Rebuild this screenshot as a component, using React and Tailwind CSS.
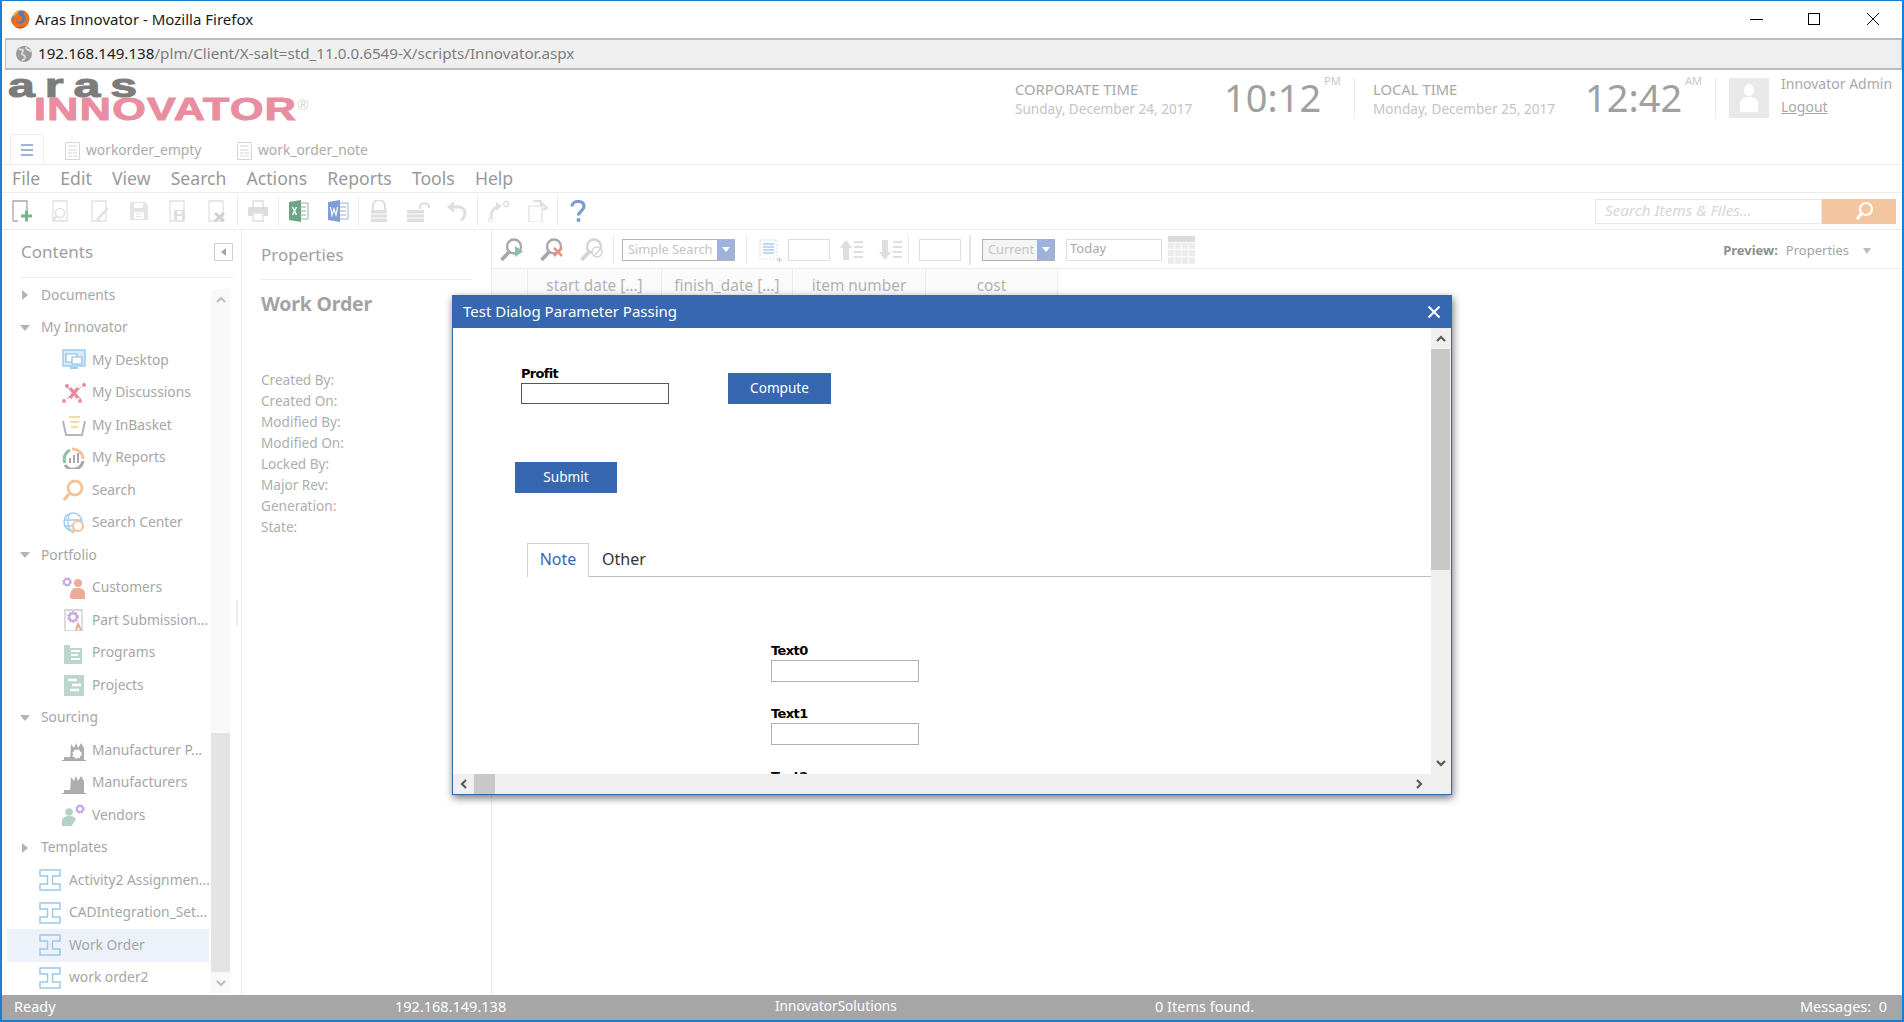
import React from "react";

const S = ({ children, w = 22, h = 22, vb, className = "" }) => (
  <svg width={w} height={h} viewBox={vb || `0 0 ${w} ${h}`} fill="none" className={"shrink-0 " + className}>{children}</svg>
);

const Gear = ({ x, y, r = 4, c = "#c6a9e0" }) => (
  <g>
    <circle cx={x} cy={y} r={r * 0.75} stroke={c} strokeWidth={r * 0.45} fill="#fff" />
    <circle cx={x} cy={y} r={r} stroke={c} strokeWidth={r * 0.4} strokeDasharray="1.6 1.6" />
  </g>
);

const Firefox = () => (
  <S w={20} h={20}>
    <circle cx="10.500" cy="10" r="8.500" fill="#4a7cc4" />
    <path d="M11 .8a9.300 9.300 0 1 1-9.800 7c.4 1.800 1.300 2.800 2.300 3.400-.3-2 .4-3.400 2-4.200.2-1.600 1.800-3 3.800-3.400-.8 1-.8 2 .2 2.600 2.400.4 3.400 2.200 2.800 4.200-.8 2.600-5 3-7 .8.800 3 4.400 4.400 7.200 2.800 3-1.800 3.400-5.400 1.800-8-1-1.800-1-3.800-3.300-5.200z" fill="#ea6f22" />
    <path d="M3 6c1.300-2.600 4-5 7.500-5.200L7 4.500 4 8z" fill="#f7b633" />
    <path d="M5 18c3 2 8 2 11-1-3 .8-7 1-11 1z" fill="#d9491d" />
  </S>
);

const Globe = () => (
  <S w={18} h={18}>
    <circle cx="9" cy="9" r="8" fill="#9a9a9a" />
    <path d="M4 4c2 1 3 0 4 1s-2 3-1 4 3 1 3 3-2 3-3 4M11 2c0 2 1 3 3 3l2 2" stroke="#d8d8d8" strokeWidth="2" />
  </S>
);

const Doc = ({ c = "#e0e0e0", children }) => (
  <S>
    <path d="M3 21V1h14v20z" stroke={c} strokeWidth="1.300" fill="#fff" />
    {children}
  </S>
);

const TbIcons = {
  add: <S><path d="M2 21V1h14v12M2 21h5" stroke="#a9a9a9" strokeWidth="1.300" /><path d="M10 16h11M15.500 10.500v11" stroke="#7db28f" strokeWidth="3" /></S>,
  view: <Doc><circle cx="10" cy="13" r="4.500" stroke="#e0e0e0" strokeWidth="1.500" fill="#fff" /><path d="M7 16l-4 4" stroke="#e0e0e0" strokeWidth="2" /></Doc>,
  edit: <Doc><path d="M19 8L8 20" stroke="#e0e0e0" strokeWidth="2.500" /></Doc>,
  save: <S><path d="M2 2h15l3 3v15H2z" fill="#e4e4e4" /><path d="M6 3h9v5H6zM6 12h10v7H6z" fill="#fff" /><path d="M8 14h6M8 16.500h6" stroke="#e4e4e4" /></S>,
  saveas: <Doc><path d="M7 10h11v10H7z" fill="#dedede" /><path d="M10 11h5v3h-5zM10 16h5v4h-5z" fill="#fff" /></Doc>,
  del: <Doc><path d="M9 13l9 8M18 13l-9 8" stroke="#d0d0d0" strokeWidth="3" /></Doc>,
  print: <S><path d="M6 1h10v7H6z" stroke="#dedede" strokeWidth="1.500" /><path d="M1 7h20v9H1z" fill="#dcdcdc" /><path d="M6 13h10v8H6z" stroke="#dedede" strokeWidth="1.300" fill="#fff" /></S>,
  excel: <S><path d="M9 3h11v16H9z" stroke="#8fb9a2" fill="#fff" /><path d="M11 7h7M11 11h7M11 15h7" stroke="#b0cfbd" strokeWidth="1.500" /><path d="M1 2l12-2v22L1 20z" fill="#6ea585" /><path d="M4.500 7l4 8M8.500 7l-4 8" stroke="#fff" strokeWidth="1.500" /></S>,
  word: <S><path d="M9 3h12v16H9z" stroke="#9cb3dd" fill="#fff" /><path d="M13 7h6M13 11h6M13 15h6" stroke="#b6c7e6" strokeWidth="1.500" /><path d="M1 2l12-2v22L1 20z" fill="#7f9fd6" /><path d="M3.500 7l1.500 8 2-6 2 6 1.500-8" stroke="#fff" strokeWidth="1.200" /></S>,
  lock: <S><path d="M5 10V6a6 6 0 0 1 12 0v4" stroke="#dedede" strokeWidth="2.200" /><path d="M3 10h16v12H3z" fill="#dedede" /><path d="M3 14h16M3 18h16" stroke="#fff" /></S>,
  unlock: <S w={24}><path d="M14 9V6a5 5 0 0 1 9 0v2" stroke="#dedede" strokeWidth="2" /><path d="M1 10h17v12H1z" fill="#dedede" /><path d="M1 14h17M1 18h17" stroke="#fff" /></S>,
  undo: <S><path d="M5 7h8a6 6 0 0 1 6 6c0 3-1 5-4 7" stroke="#dedede" strokeWidth="3" /><path d="M8 1v12L1 7z" fill="#dedede" /></S>,
  redo: <S w={24}><path d="M4 18c0-6 2-10 7-11" stroke="#dedede" strokeWidth="2.500" /><path d="M9 2l6 4-6 5z" fill="#dedede" /><circle cx="3.500" cy="20" r="2" stroke="#dedede" /><circle cx="19" cy="4" r="2.500" stroke="#dedede" strokeWidth="1.300" /></S>,
  copy: <S><path d="M3 6h13v16H3z" stroke="#dedede" strokeWidth="1.200" fill="#fff" /><path d="M7 1h8v5M13 1l8 7-4 2" stroke="#dedede" strokeWidth="2" /></S>,
  help: <S><path d="M5 6.500C5 3 8 1.500 11 1.500c4 0 6 2.200 6 5 0 4.500-5.500 4.500-5.500 9" stroke="#7c9bd0" strokeWidth="3.200" /><circle cx="11.500" cy="20" r="2" fill="#7c9bd0" /></S>,
};

const Sep = ({ cls = "mx-[9px]" }) => <div className={"w-px h-[30px] bg-[#ececec] shrink-0 " + cls} />;

const Mag = ({ children, c = "#a8a8a8" }) => (
  <S w={24} h={24}>
    <circle cx="14" cy="8.500" r="7" stroke={c} strokeWidth="2.400" fill="#fff" />
    <path d="M9 14L1.500 22" stroke={c} strokeWidth="3.800" />
    {children}
  </S>
);

const Tmpl = () => (
  <S>
    <path d="M1 7V1h20v6h-7.500v8H21v6H1v-6h7.500V7z" stroke="#9cc8ec" strokeWidth="1.500" />
  </S>
);

const Factory = ({ gear }) => (
  <S w={24} h={22}>
    <path d="M0 21h24v1.500H0z" fill="#a8a8a8" />
    <path d="M8 21L9 5l3 4 2-5 2 5 3-5 3 5v12z" fill="#adadad" />
    <path d="M2 18h7v3H2z" fill="#adadad" />
    {gear && <Gear x={15} y={15} r={4} c="#fff" />}
  </S>
);

const TI = {
  desktop: <S w={24}><path d="M1 1h22v16H1z" fill="#d7ebfa" stroke="#9fcdf0" strokeWidth="1.500" /><path d="M4 5h11v8H4z" stroke="#86bce8" strokeWidth="1.200" fill="#fff" /><path d="M10 8h10v7H10z" stroke="#86bce8" strokeWidth="1.200" fill="#fff" /><path d="M8 19h8" stroke="#9fcdf0" strokeWidth="2" /></S>,
  disc: <S w={24}><path d="M8 6l8 10M16 6L8 16" stroke="#ea8a9a" strokeWidth="3.500" /><path d="M5 5l14 12M19 5L5 17" stroke="#ea8a9a" strokeWidth="1" /><circle cx="5" cy="4" r="2" fill="#ea8a9a" /><circle cx="22" cy="3" r="2" fill="#ea8a9a" /><circle cx="2" cy="19" r="2" fill="#ea8a9a" /><circle cx="18" cy="19" r="2" fill="#ea8a9a" /></S>,
  basket: <S w={24}><path d="M1 7l3 14h16l3-14" stroke="#b5b5b5" strokeWidth="2" /><path d="M7 3h11M8 8h9M9 13h7" stroke="#f5dc9c" strokeWidth="2.200" /></S>,
  reports: <S w={24}><path d="M3 16A10 10 0 0 1 8 3" stroke="#8ec0a3" strokeWidth="3" /><path d="M10 2a10 10 0 0 1 11 10" stroke="#f3c39c" strokeWidth="3" /><path d="M21 14a10 10 0 0 1-18 4" stroke="#a8a8a8" strokeWidth="3" /><path d="M8 11v5M12 8v8M16 6v10" stroke="#a9a9a9" strokeWidth="2" /></S>,
  search: <S w={24}><circle cx="13" cy="9" r="7" stroke="#f3c39c" strokeWidth="2.800" fill="#fff" /><path d="M7 15l-5 6" stroke="#f3c39c" strokeWidth="3.500" /></S>,
  center: <S w={24}><circle cx="11" cy="10" r="9" stroke="#9fcdf0" strokeWidth="1.500" /><path d="M2 8h18M2 14h10M8 1C5 6 5 14 9 19" stroke="#9fcdf0" strokeWidth="1.300" /><circle cx="16" cy="14" r="5" stroke="#f3c39c" strokeWidth="2.200" fill="#fff" /><path d="M12 18l-2 3" stroke="#f3c39c" strokeWidth="2.500" /></S>,
  customers: <S w={24}><Gear x={5} y={5} r={4} /><circle cx="16" cy="6" r="4" fill="#ecab9c" /><path d="M8 21c0-9 3-10 8-10s7 2 7 7v4H10z" fill="#ecab9c" /></S>,
  part: <S w={24}><path d="M3 1h17v21H3z" stroke="#c9c9c9" strokeWidth="1.300" fill="#fff" /><Gear x={11} y={8} r={5} /><path d="M14 21l2-6 3 6" stroke="#eba894" strokeWidth="2" /></S>,
  programs: <S w={24}><path d="M2 3h6v3h12v16H2z" fill="#bbd7cc" /><path d="M9 9h9M9 13h7M9 17h9" stroke="#fff" strokeWidth="2" /></S>,
  projects: <S w={24}><path d="M2 1h20v21H2z" fill="#bbd7cc" /><path d="M6 6h9M10 11h9M8 16h9" stroke="#fff" strokeWidth="2.500" /></S>,
  mfgp: <Factory gear />,
  mfg: <Factory />,
  vendors: <S w={24}><Gear x={18} y={5} r={4} /><circle cx="7" cy="8" r="3.800" fill="#b5d1c5" /><path d="M0 22v-5c0-3 3-5 7-5s6 1 7 3l-3 5-2 2z" fill="#b5d1c5" /></S>,
};

const Arrow = ({ open }) => open
  ? <div className="w-0 h-0 border-l-[5px] border-r-[5px] border-t-[6px] border-l-transparent border-r-transparent border-t-[#b4b4b4]" />
  : <div className="w-0 h-0 border-t-[5px] border-b-[5px] border-l-[6px] border-t-transparent border-b-transparent border-l-[#b4b4b4]" />;

const Group = ({ label, open }) => (
  <div className="h-[32.500px] flex items-center">
    <div className="w-[39px] shrink-0 pl-[18px]"><div className="w-[10px] flex justify-center"><Arrow open={open} /></div></div>
    <span>{label}</span>
  </div>
);

const Leaf = ({ icon, label }) => (
  <div className="h-[32.500px] flex items-center pl-[60px]">
    <div className="w-[30px] shrink-0 flex items-center">{TI[icon]}</div>
    <span className="whitespace-nowrap">{label}</span>
  </div>
);

const TLeaf = ({ label, sel }) => (
  <div className={"h-[32.500px] flex items-center " + (sel ? "bg-[#edf2fa] ml-[5px] pl-[32px] w-[203px]" : "pl-[37px]")}>
    <div className="w-[30px] shrink-0 flex items-center"><Tmpl /></div>
    <span className="whitespace-nowrap">{label}</span>
  </div>
);

const Chev = ({ d, c = "#5a5a5a", size = 10, sw = 2.200 }) => {
  const p = { up: "M1 7l4-4 4 4", down: "M1 3l4 4 4-4", left: "M7 1L3 5l4 4", right: "M3 1l4 4-4 4" }[d];
  return <svg width={size} height={size} viewBox="0 0 10 10" fill="none"><path d={p} stroke={c} strokeWidth={sw} /></svg>;
};

const Combo = ({ w, label, bg = "bg-white", border = "border-[#b5b5b5]" }) => (
  <div className={"h-[22px] flex border items-stretch shrink-0 " + border + " " + w}>
    <div className={"flex-1 flex items-center pl-[5px] pt-[1px] text-[12.800px] text-[#c4c4c4] " + bg}>{label}</div>
    <div className="w-[17px] bg-[#9db3dd] flex items-center justify-center">
      <div className="w-0 h-0 border-l-[4px] border-r-[4px] border-t-[5px] border-l-transparent border-r-transparent border-t-white" />
    </div>
  </div>
);

const Empty = ({ w = "w-[42px]" }) => <div className={"h-[22px] border border-[#dedede] shrink-0 " + w} />;

const Field = ({ label, mt }) => (
  <div className={"ml-[318px] w-[148px] " + mt}>
    <div className="h-[17px] text-[13px] leading-[17px] font-bold text-black font-['DejaVu_Sans',sans-serif] tracking-[-0.6px]">{label}</div>
    <div className="h-[22px] border border-[#b0b0b0] mt-[1px]" />
  </div>
);

export default function App() {
  const props = ["Created By:", "Created On:", "Modified By:", "Modified On:", "Locked By:", "Major Rev:", "Generation:", "State:"];
  return (
    <div className="relative w-[1904px] h-[1022px] overflow-hidden bg-white flex flex-col border-t border-x-2 border-b-2 border-[#1a7fd4] font-['Noto_Sans',sans-serif] text-[#a3a3a3]">
      {/* title bar */}
      <div className="h-[37px] shrink-0 flex items-center pl-[8px] pb-[1px] text-[15px] text-[#1a1a1a]">
        <Firefox />
        <span className="ml-[5px]">Aras Innovator - Mozilla Firefox</span>
        <div className="ml-auto flex items-center">
          <div className="w-[13px] h-px bg-black mr-[45px]" />
          <div className="w-[12px] h-[12px] border border-black mr-[46px]" />
          <svg width="14" height="14" viewBox="0 0 14 14" className="mr-[22px]"><path d="M1 1l12 12M13 1L1 13" stroke="#111" strokeWidth="1" /></svg>
        </div>
      </div>
      {/* address bar */}
      <div className="h-[32px] shrink-0 ml-[3px] bg-[#efefef] border-y-2 border-l border-r border-[#b6bcc2] flex items-center pl-[9px] pb-[1px] text-[15.200px]">
        <Globe />
        <span className="ml-[5px] text-[#222]">192.168.149.138</span>
        <span className="text-[#7d7d7d]">/plm/Client/X-salt=std_11.0.0.6549-X/scripts/Innovator.aspx</span>
      </div>
      {/* header */}
      <div className="h-[64px] shrink-0 flex items-start">
        <div className="w-[320px] h-[56px] pl-[6px] pt-[3px] font-['Liberation_Sans',sans-serif] font-bold leading-none select-none">
          <div className="text-[34px] h-[24px] leading-[24px] text-[#7c7c7c] tracking-[7px] origin-left scale-x-[1.42] [-webkit-text-stroke:1px_#7c7c7c]">aras</div>
          <div className="flex items-start ml-[26px]">
            <div className="text-[32px] h-[25px] leading-[25px] text-[#e98ea0] tracking-[1px] origin-left scale-x-[1.345] w-[264px] [-webkit-text-stroke:1px_#e98ea0]">INNOVATOR</div>
            <span className="text-[14px] font-normal text-[#cfcfcf] mt-[1px]">®</span>
          </div>
        </div>
        <div className="ml-auto flex items-start pt-[8px] pr-[11px]">
          <div className="w-[209px] pt-[1px]">
            <div className="text-[14.800px] leading-[20px] text-[#a8a8a8] whitespace-nowrap">CORPORATE TIME</div>
            <div className="text-[13.600px] leading-[19px] text-[#c4c4c4] whitespace-nowrap">Sunday, December 24, 2017</div>
          </div>
          <div className="w-[98px] text-[38px] leading-[41px] mt-[-1px] text-[#a0a0a0] whitespace-nowrap">10:12</div>
          <div className="text-[11px] text-[#c8c8c8] ml-[2px] w-[30px] mt-[-5px]">PM</div>
          <div className="w-px h-[40px] bg-[#ececec]" />
          <div className="w-[230px] pl-[18px] pt-[1px]">
            <div className="text-[14.800px] leading-[20px] text-[#a8a8a8] whitespace-nowrap">LOCAL TIME</div>
            <div className="text-[13.600px] leading-[19px] text-[#c4c4c4] whitespace-nowrap">Monday, December 25, 2017</div>
          </div>
          <div className="w-[100px] text-[38px] leading-[41px] mt-[-1px] text-[#a0a0a0] whitespace-nowrap">12:42</div>
          <div className="text-[11px] text-[#c8c8c8] w-[30px] mt-[-5px]">AM</div>
          <div className="w-px h-[40px] bg-[#ececec]" />
          <div className="w-[40px] h-[40px] ml-[13px] bg-[#e9e9e9] flex items-center justify-center">
            <svg width="20" height="30" viewBox="0 0 20 30"><ellipse cx="10" cy="7" rx="5" ry="6" fill="#fff" /><path d="M1 29v-9c0-4 4-6 9-6s9 2 9 6v9z" fill="#fff" /></svg>
          </div>
          <div className="ml-[12px] w-[110px] text-[14px] text-[#a8a8a8] whitespace-nowrap">
            <div className="leading-[20px] mt-[-4px]">Innovator Admin</div>
            <div className="leading-[20px] mt-[3px] underline">Logout</div>
          </div>
        </div>
      </div>
      {/* tabs */}
      <div className="h-[31px] shrink-0 flex items-stretch border-b border-[#ececec] text-[13.800px] text-[#ababab]">
        <div className="ml-[8px] w-[34px] border border-b-0 border-[#eeeeee] flex flex-col items-center justify-center gap-[3px]">
          <div className="w-[12px] h-[2px] bg-[#9db3dd]" /><div className="w-[12px] h-[2px] bg-[#9db3dd]" /><div className="w-[12px] h-[2px] bg-[#9db3dd]" />
        </div>
        <div className="flex items-center ml-[21px] pt-[3px]">
          <S w={15} h={18}><path d="M.5.500h14v17H.5z" stroke="#d5d5d5" /><path d="M3 4h9M3 8h9M3 11h4M8 11h4M3 14h4M8 14h4" stroke="#d5d5d5" /></S>
          <span className="ml-[6px] w-[151px]">workorder_empty</span>
          <S w={15} h={18}><path d="M.5.500h14v17H.5z" stroke="#d5d5d5" /><path d="M3 4h9M3 8h9M3 11h4M8 11h4M3 14h4M8 14h4" stroke="#d5d5d5" /></S>
          <span className="ml-[6px]">work_order_note</span>
        </div>
      </div>
      {/* menu */}
      <div className="h-[28px] shrink-0 flex items-center gap-[20.200px] pl-[10px] text-[17.600px] text-[#999] border-b border-[#ececec]">
        {["File", "Edit", "View", "Search", "Actions", "Reports", "Tools", "Help"].map(m => <span key={m}>{m}</span>)}
      </div>
      {/* toolbar */}
      <div className="h-[37px] shrink-0 flex items-center pl-[9px] border-b border-[#ececec]">
        <div className="flex gap-[17px]">{TbIcons.add}{TbIcons.view}{TbIcons.edit}{TbIcons.save}{TbIcons.saveas}{TbIcons.del}</div>
        <Sep />
        {TbIcons.print}
        <Sep />
        <div className="flex gap-[17px]">{TbIcons.excel}{TbIcons.word}</div>
        <Sep />
        <div className="flex gap-[16px]">{TbIcons.lock}{TbIcons.unlock}{TbIcons.undo}</div>
        <Sep />
        <div className="flex gap-[15px]">{TbIcons.redo}{TbIcons.copy}</div>
        <Sep />
        {TbIcons.help}
        <div className="ml-auto mr-[6px] flex items-center">
          <div className="w-[227px] h-[25px] border border-[#e6e6e6] pl-[9px] pb-[1px] flex items-center text-[15.300px] italic text-[#d6d6d6]">Search Items &amp; Files...</div>
          <div className="w-[74px] h-[25px] bg-[#f4c6a0] pl-[32px] flex items-center">
            <svg width="20" height="20" viewBox="0 0 20 20" fill="none"><circle cx="12" cy="8" r="6" stroke="#fff" strokeWidth="2.200" /><path d="M7 13l-4 5" stroke="#fff" strokeWidth="3" /></svg>
          </div>
        </div>
      </div>
      {/* main */}
      <div className="flex-1 min-h-0 flex">
        {/* sidebar */}
        <div className="w-[240px] shrink-0 border-r border-[#ececec] flex flex-col relative">
          <div className="h-[48px] shrink-0 ml-[19px] mr-[8px] border-b border-[#ececec] flex items-center justify-between text-[17px] text-[#a0a0a0] pb-[3px]">
            <span>Contents</span>
            <div className="w-[19px] h-[18px] border border-[#cfcfcf] flex items-center justify-center">
              <div className="w-0 h-0 border-t-[4px] border-b-[4px] border-r-[5px] border-t-transparent border-b-transparent border-r-[#a5a5a5]" />
            </div>
          </div>
          <div className="flex-1 min-h-0 flex pt-[1px] pr-[11px]">
            <div className="w-[207px] shrink-0 text-[13.800px] text-[#a6a6a6] overflow-hidden">
              <Group label="Documents" />
              <Group label="My Innovator" open />
              <Leaf icon="desktop" label="My Desktop" />
              <Leaf icon="disc" label="My Discussions" />
              <Leaf icon="basket" label="My InBasket" />
              <Leaf icon="reports" label="My Reports" />
              <Leaf icon="search" label="Search" />
              <Leaf icon="center" label="Search Center" />
              <Group label="Portfolio" open />
              <Leaf icon="customers" label="Customers" />
              <Leaf icon="part" label="Part Submission..." />
              <Leaf icon="programs" label="Programs" />
              <Leaf icon="projects" label="Projects" />
              <Group label="Sourcing" open />
              <Leaf icon="mfgp" label="Manufacturer P..." />
              <Leaf icon="mfg" label="Manufacturers" />
              <Leaf icon="vendors" label="Vendors" />
              <Group label="Templates" />
              <TLeaf label="Activity2 Assignmen..." />
              <TLeaf label="CADIntegration_Set..." />
              <TLeaf label="Work Order" sel />
              <TLeaf label="work order2" />
            </div>
            <div className="w-[20px] ml-[2px] mt-[10px] mb-[2px] bg-[#f9f9f9] flex flex-col">
              <div className="h-[22px] flex items-center justify-center"><Chev d="up" c="#bdbdbd" /></div>
              <div className="h-[422px]" />
              <div className="flex-1 bg-[#e4e4e4]" />
              <div className="h-[21px] flex items-center justify-center"><Chev d="down" c="#bdbdbd" /></div>
            </div>
          </div>
          <div className="absolute right-[3px] top-[370px] w-[2px] h-[26px] bg-[#ececec]" />
        </div>
        {/* properties */}
        <div className="w-[250px] shrink-0 border-r border-[#ececec] px-[19px]">
          <div className="h-[50px] border-b border-[#ececec] flex items-center text-[17px] text-[#a0a0a0]">Properties</div>
          <div className="mt-[12px] text-[19.500px] leading-[24px] font-bold text-[#a3a3a3] tracking-[-0.2px]">Work Order</div>
          <div className="mt-[53px] text-[13.600px] text-[#aeaeae]">
            {props.map(p => <div key={p} className="h-[21px] leading-[21px]">{p}</div>)}
          </div>
        </div>
        {/* content */}
        <div className="flex-1 min-w-0 flex flex-col">
          <div className="h-[38px] shrink-0 border-b border-[#ececec] flex items-center pl-[8px] mt-[1px]">
            <div className="flex gap-[16px]">
              <Mag><path d="M15 8l8 5.500-8 5.500z" fill="#8fbfa2" /></Mag>
              <Mag><path d="M14 10l8 8M22 10l-8 8" stroke="#ea8f82" strokeWidth="2.500" /></Mag>
              <Mag c="#d4d4d4"><circle cx="17" cy="14" r="5" stroke="#d4d4d4" strokeWidth="1.500" fill="#fff" /><path d="M14 18l6-7" stroke="#d4d4d4" strokeWidth="1.500" /></Mag>
            </div>
            <Sep cls="ml-[9px] mr-[8px]" />
            <Combo w="w-[113px]" label="Simple Search" />
            <Sep cls="mx-[11px]" />
            <S w={24} h={24}><path d="M2 2h17v19H2z" stroke="#d8d8d8" strokeDasharray="2 1.500" /><path d="M5 6h11M5 9h11M5 12h11M5 15h11" stroke="#a9cdf0" strokeWidth="1.500" /><path d="M19 22h5M21.500 19v5" stroke="#c4c4c4" /></S>
            <Empty w="w-[42px] ml-[6px]" />
            <S w={26} h={22} className="ml-[9px]"><path d="M7 1l6 8h-3v12H4V9H1z" fill="#dedede" /><path d="M15 3h9M15 8h9M15 13h9M15 18h9" stroke="#dedede" strokeWidth="2" /></S>
            <S w={26} h={22} className="ml-[13px]"><path d="M7 21l6-8h-3V1H4v12H1z" fill="#dedede" /><path d="M15 3h9M15 8h9M15 13h9M15 18h9" stroke="#dedede" strokeWidth="2" /></S>
            <Sep cls="ml-[4px] mr-[10px]" />
            <Empty />
            <div className="w-[2px] h-[30px] bg-[#e6e6e6] mx-[8px] shrink-0" />
            <div className="ml-[3px]"><Combo w="w-[73px]" label="Current" bg="bg-[#f4f4f4]" border="border-[#b0b0b0]" /></div>
            <div className="ml-[11px] w-[96px] h-[22px] border border-[#dedede] pl-[3px] text-[13px] leading-[16px] text-[#a8a8a8]">Today</div>
            <div className="ml-[6px] w-[27px] h-[28px] grid grid-cols-4 grid-rows-4 gap-px bg-[#ffffff]">
              <div className="col-span-4 bg-[#dcdcdc]" />
              {Array.from({ length: 12 }).map((_, i) => <div key={i} className="bg-[#ececec]" />)}
            </div>
            <div className="ml-auto mr-[31px] pt-[2px] flex items-center text-[13px]">
              <b className="text-[#8e8e8e] font-bold mr-[8px]">Preview:</b>
              <span className="text-[#a3a3a3]">Properties</span>
              <div className="ml-[14px] w-0 h-0 border-l-[4px] border-r-[4px] border-t-[6px] border-l-transparent border-r-transparent border-t-[#bdbdbd]" />
            </div>
          </div>
          <div className="flex text-[15.400px] text-[#b2b2b2] h-[30px] items-stretch">
            <div className="w-[36px] bg-[#fbfbfb] border-r border-[#ececec]" />
            <div className="w-[134px] bg-[#fbfbfb] border-r border-[#ececec] text-center pt-[5px]">start date [...]</div>
            <div className="w-[131px] bg-[#fbfbfb] border-r border-[#ececec] text-center pt-[5px]">finish_date [...]</div>
            <div className="w-[133px] bg-[#fbfbfb] border-r border-[#ececec] text-center pt-[5px]">item number</div>
            <div className="w-[132px] bg-[#fbfbfb] border-r border-[#ececec] text-center pt-[5px]">cost</div>
          </div>
        </div>
      </div>
      {/* status */}
      <div className="h-[25px] shrink-0 bg-[#a6a6a6] text-white text-[14.500px] flex items-center pl-[12px] pr-[15px] pb-[2px]">
        <span className="w-[381px]">Ready</span>
        <span className="w-[380px]">192.168.149.138</span>
        <span className="w-[380px] text-[13.600px]">InnovatorSolutions</span>
        <span>0 Items found.</span>
        <span className="ml-auto">Messages:&nbsp; 0</span>
      </div>

      {/* dialog */}
      <div className="absolute left-[450px] top-[294px] w-[1000px] h-[500px] bg-white border border-t-0 border-[#3767b1] flex flex-col shadow-[1px_3px_8px_rgba(0,0,0,0.55)]">
        <div className="h-[33px] shrink-0 -mx-[1px] bg-[#3767b1] flex items-center pl-[11px] pr-[11px] justify-between text-white text-[15px]">
          <span>Test Dialog Parameter Passing</span>
          <svg width="14" height="14" viewBox="0 0 14 14"><path d="M1.500 1.500l11 11M12.500 1.500l-11 11" stroke="#fff" strokeWidth="2" /></svg>
        </div>
        <div className="flex-1 min-h-0 flex">
          <div className="w-[978px] flex flex-col">
            <div className="flex-1 min-h-0 overflow-hidden">
              <div className="mt-[37px] ml-[68px] flex items-end">
                <div className="w-[148px]">
                  <div className="h-[18px] text-[13px] leading-[18px] font-bold text-black font-['DejaVu_Sans',sans-serif] tracking-[-0.7px]">Profit</div>
                  <div className="h-[21px] border border-[#555]" />
                </div>
                <button className="ml-[59px] w-[103px] h-[31px] bg-[#3767b1] text-white text-[13.600px]">Compute</button>
              </div>
              <button className="block mt-[58px] ml-[62px] w-[102px] h-[31px] bg-[#3767b1] text-white text-[13.600px]">Submit</button>
              <div className="mt-[50px] ml-[74px] h-[34px] flex items-stretch border-b border-[#bcbccb] text-[16px]">
                <div className="w-[62px] h-[34px] border border-b-0 border-[#d0d0d8] bg-white text-[#3767b1] flex items-center justify-center pb-[3px]">Note</div>
                <div className="pl-[13px] flex items-center text-[#333] pb-[2px]">Other</div>
              </div>
              <Field label="Text0" mt="mt-[65px]" />
              <Field label="Text1" mt="mt-[23px]" />
              <Field label="Text2" mt="mt-[23px]" />
            </div>
            <div className="h-[20px] shrink-0 bg-[#efefef] flex items-center">
              <div className="w-[21px] flex justify-center"><Chev d="left" /></div>
              <div className="w-[21px] h-[20px] bg-[#c8c8c8]" />
              <div className="ml-auto mr-[7px]"><Chev d="right" /></div>
            </div>
          </div>
          <div className="w-[20px] shrink-0 bg-[#efefef] flex flex-col pr-[1px]">
            <div className="h-[21px] flex items-center justify-center"><Chev d="up" /></div>
            <div className="h-[221px] bg-[#c8c8c8]" />
            <div className="flex-1 flex flex-col justify-end items-center pb-[26px]"><Chev d="down" /></div>
          </div>
        </div>
      </div>
    </div>
  );
}
